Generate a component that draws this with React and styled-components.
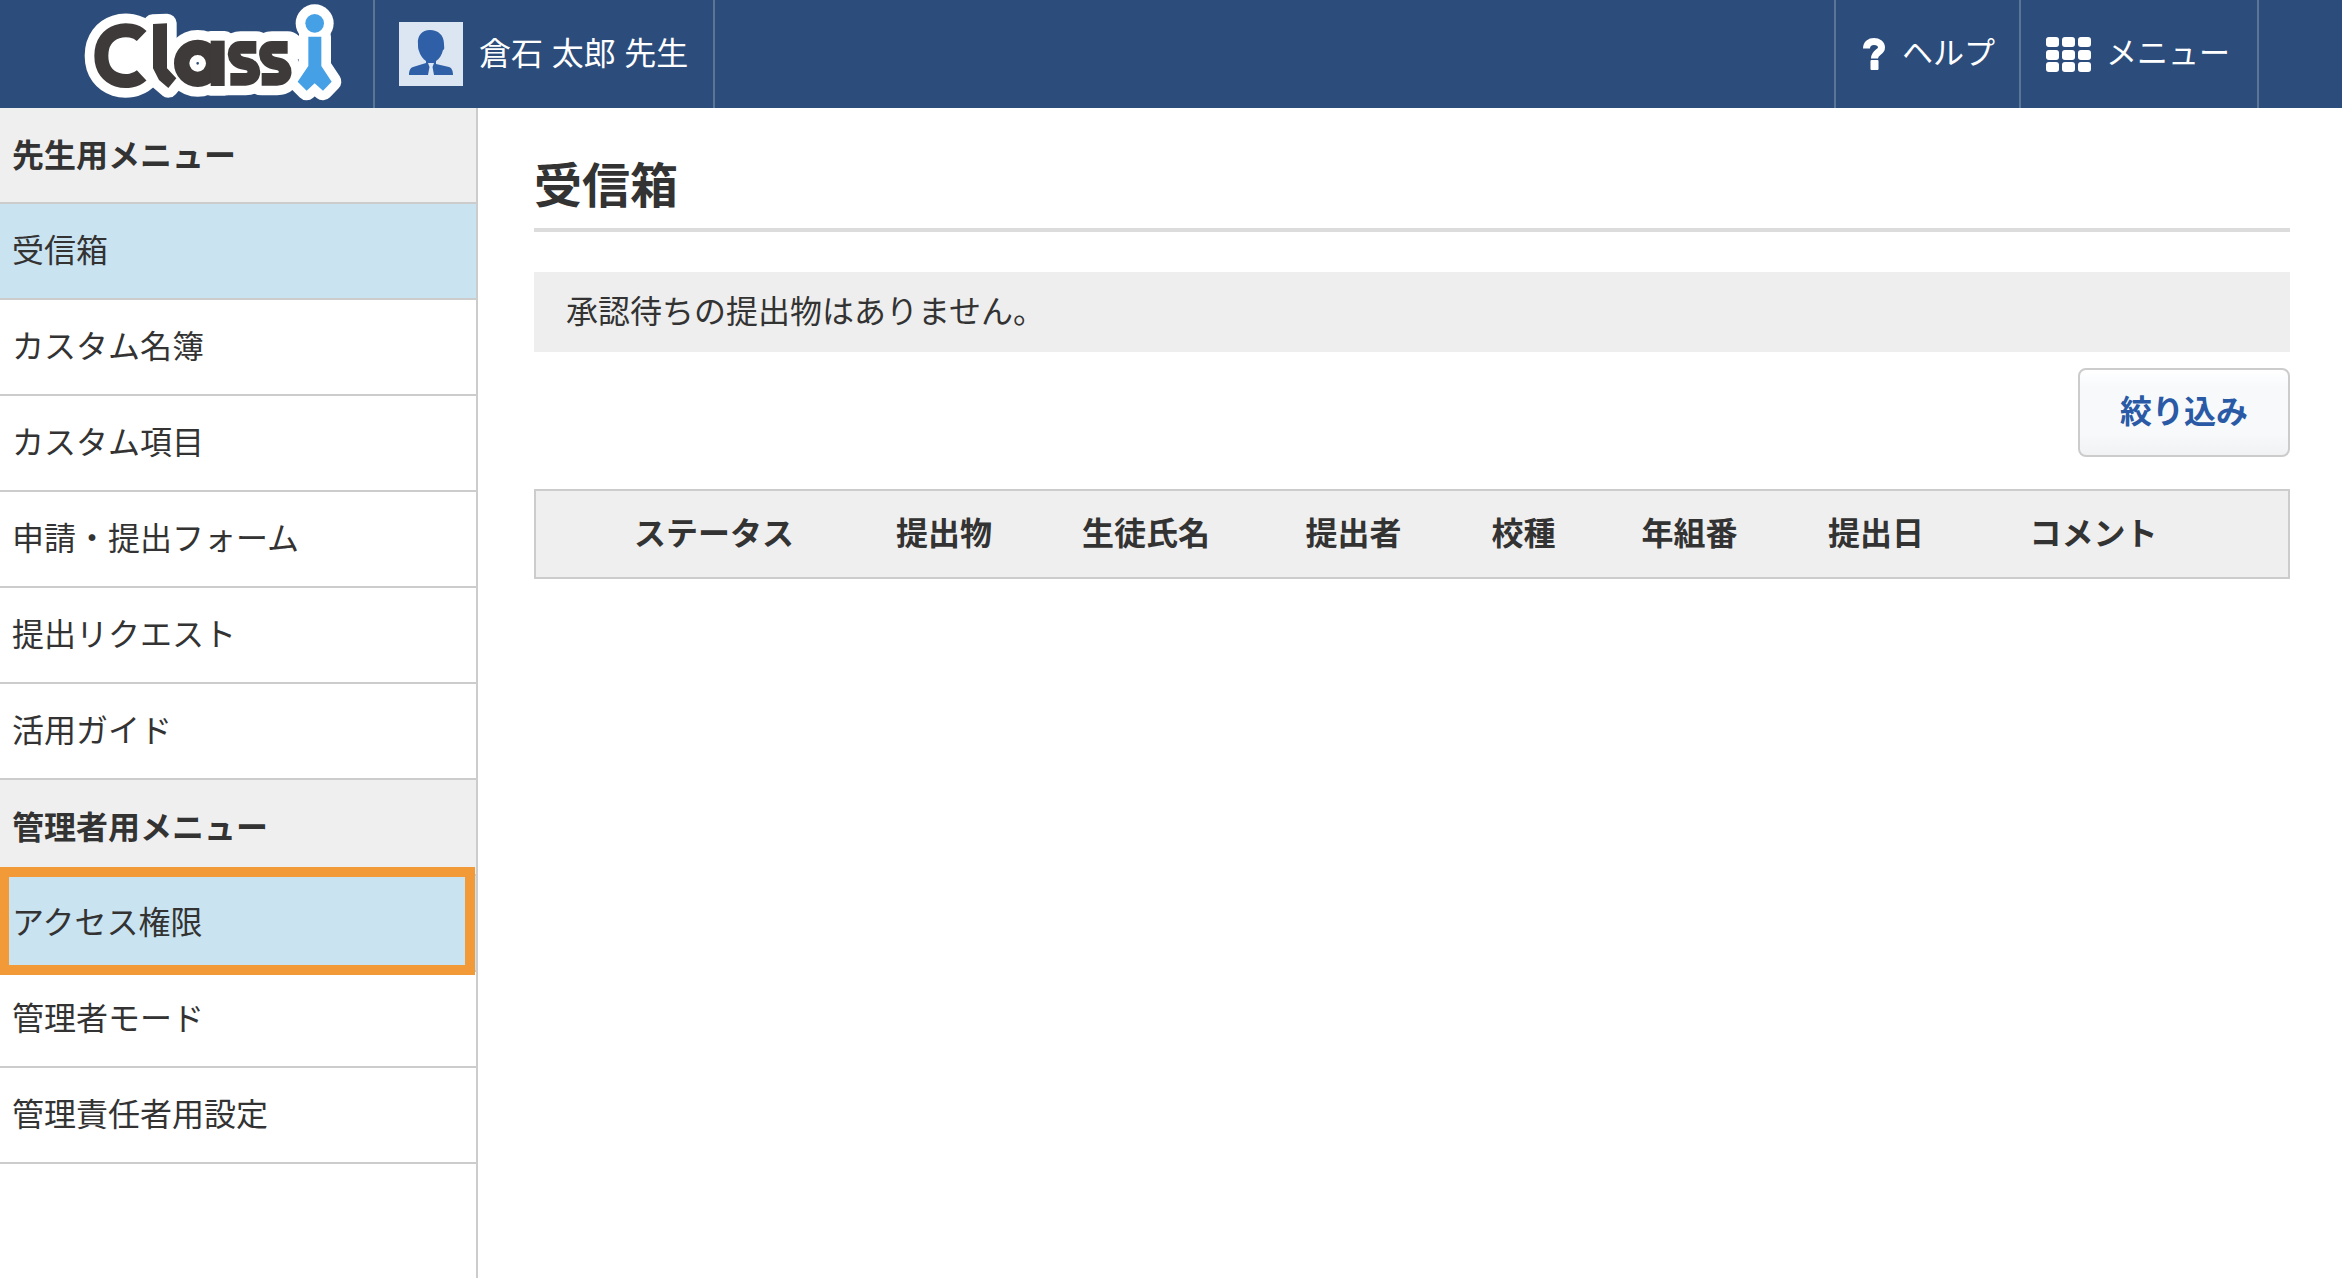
import React from "react";
import styled, { createGlobalStyle } from "styled-components";

const Global = createGlobalStyle`
  html, body { margin: 0; padding: 0; background: #fff; }
  body { font-family: "Noto Sans CJK JP", "Liberation Sans", sans-serif; color: #333; overflow: hidden; }
  * { box-sizing: border-box; }
`;

const Page = styled.div`
  width: 2342px;
  height: 1278px;
  display: flex;
  flex-direction: column;
`;

const TopBar = styled.header`
  height: 108px;
  flex: none;
  display: flex;
  align-items: stretch;
  background: #2c4d7c;
  color: #fff;
  font-size: 32px;
`;

const LogoSlot = styled.div`
  width: 373px;
  flex: none;
  padding-left: 59px;
  display: flex;
  align-items: flex-start;
`;

const UserBox = styled.div`
  width: 342px;
  display: flex;
  align-items: center;
  gap: 16px;
  padding-left: 24px;
  border-left: 2px solid #5b7597;
  border-right: 2px solid #5b7597;
`;

const Avatar = styled.svg`
  width: 64px;
  height: 64px;
  flex: none;
  display: block;
`;

const BarLabel = styled.span`
  margin-bottom: 7px;
  line-height: 40px;
  word-spacing: 1.5px;
`;

const Spacer = styled.div`
  flex: 1;
`;

const TopLink = styled.a`
  width: ${(p) => p.$width}px;
  padding-left: ${(p) => p.$pad}px;
  display: flex;
  align-items: center;
  gap: ${(p) => p.$gap}px;
  font-size: 31px;
  border-left: 2px solid #5b7597;
  border-right: ${(p) => (p.$last ? "2px solid #5b7597" : "0")};
`;

const RightGap = styled.div`
  width: 83px;
  flex: none;
`;

const Body = styled.div`
  flex: 1;
  display: flex;
  min-height: 0;
`;

const Sidebar = styled.nav`
  width: 478px;
  flex: none;
  border-right: 2px solid #ccc;
`;

const SectionTitle = styled.div`
  height: 96px;
  display: flex;
  align-items: center;
  padding: 0 0 5px 12px;
  font-size: 32px;
  font-weight: 700;
  background: #efefef;
  border-bottom: 2px solid #ccc;
`;

const MenuRow = styled.div`
  position: relative;
  z-index: ${(p) => (p.$framed ? 1 : "auto")};
  height: 96px;
  display: flex;
  align-items: center;
  padding: 0 0 6px 12px;
  font-size: 32px;
  background: ${(p) => (p.$active ? "#cae3f1" : "#fff")};
  border-bottom: 2px solid #ccc;
`;

const Highlight = styled.div`
  position: absolute;
  top: -9px;
  left: 0;
  right: 1px;
  bottom: -5px;
  border: 10px solid #f29938;
  border-left-width: 9px;
`;

const Main = styled.main`
  flex: 1;
  padding: 51px 52px 0 56px;
`;

const Title = styled.h1`
  margin: 0;
  height: 69px;
  font-size: 48px;
  line-height: 46px;
  font-weight: 700;
`;

const TitleRule = styled.div`
  height: 4px;
  background: #dcdcdc;
`;

const Notice = styled.div`
  margin-top: 40px;
  height: 80px;
  display: flex;
  align-items: center;
  padding: 0 0 6px 32px;
  background: #eee;
  font-size: 32px;
`;

const ButtonRow = styled.div`
  margin-top: 16px;
  display: flex;
  justify-content: flex-end;
`;

const FilterButton = styled.button`
  width: 212px;
  height: 89px;
  padding: 0 0 8px;
  font-family: inherit;
  font-size: 32px;
  font-weight: 700;
  color: #2a5aa5;
  background: linear-gradient(#ffffff, #f7f9fb 20%, #f7f9fb 75%, #f0f2f4);
  border: 2px solid #ccc;
  border-radius: 8px;
`;

const TableHead = styled.div`
  margin-top: 32px;
  height: 90px;
  padding-bottom: 7px;
  display: grid;
  grid-template-columns: 48px 260px 200px 204px 211px 129px 203px 170px 265px 1fr;
  align-items: center;
  background: #efefef;
  border: 2px solid #ccc;
  font-size: 32px;
  font-weight: 700;
`;

const HeadCell = styled.div`
  text-align: center;
  line-height: 40px;
`;

function ClassiShapes({ extra, white }) {
  const dark = white ? "#fff" : "#3e3a39";
  const blue = white ? "#fff" : "#45a0e6";
  const cap = white ? "round" : "butt";
  const line = { fill: "none", strokeLinejoin: "round", strokeLinecap: cap };
  const solid = { strokeWidth: extra, strokeLinejoin: "round" };
  return (
    <g>
      <path d="M248 108C215 76 127 85 127 167C127 250 215 257 248 226" stroke={dark} strokeWidth={42 + extra} {...line} />
      <path d="M282 72L324 70L324 205L352 235L328 264L300 240L282 205Z" fill={dark} stroke={white ? dark : "none"} {...solid} />
      <circle cx="416" cy="190" r="48" stroke={dark} strokeWidth={46 + extra} fill="none" />
      <path d="M455 122H497V258H455Z" fill={dark} stroke={white ? dark : "none"} {...solid} />
      <path d="M592 142L545 142C518 142 518 182 550 189L565 192C592 198 592 238 560 238L514 238" stroke={dark} strokeWidth={38 + extra} {...line} />
      <path d="M686 142L639 142C612 142 612 182 644 189L659 192C686 198 686 238 654 238L608 238" stroke={dark} strokeWidth={38 + extra} {...line} />
      <circle cx="767" cy="70" r={28 + extra / 2} fill={blue} />
      <path d="M748 110H787V198L818 245L792 272L767 250L743 272L716 245L748 198Z" fill={blue} stroke={white ? blue : "none"} {...solid} />
    </g>
  );
}

function Logo() {
  return (
    <svg width="300" height="108" viewBox="0 0 900 324" aria-label="Classi">
      <ellipse cx="190" cy="170" rx="100" ry="100" fill="#fff" />
      <ClassiShapes extra={58} white />
      <ClassiShapes extra={0} />
    </svg>
  );
}

function HelpIcon() {
  return (
    <svg width="22" height="32" viewBox="0 0 22 32">
      <path d="M3.5 10.5C3.5 5.5 7 3.5 11 3.5C15 3.5 18.5 5.5 18.5 9.5C18.5 14.5 11.5 14 11.5 20.5" fill="none" stroke="#fff" strokeWidth="7" />
      <rect x="7.5" y="22" width="8" height="10" rx="1" fill="#fff" />
    </svg>
  );
}

function GridIcon() {
  const cells = [];
  [0, 13, 25].forEach((y) =>
    [0, 16, 32].forEach((x) => cells.push(<rect key={`${x}-${y}`} x={x} y={y} width="13" height="10" rx="3" fill="#fff" />))
  );
  return (
    <svg width="45" height="35" viewBox="0 0 45 35">
      {cells}
    </svg>
  );
}

const columns = ["", "ステータス", "提出物", "生徒氏名", "提出者", "校種", "年組番", "提出日", "コメント", ""];
const teacherMenu = ["受信箱", "カスタム名簿", "カスタム項目", "申請・提出フォーム", "提出リクエスト", "活用ガイド"];
const adminMenu = ["アクセス権限", "管理者モード", "管理責任者用設定"];

export default function App() {
  return (
    <Page>
      <Global />
      <TopBar>
        <LogoSlot>
          <Logo />
        </LogoSlot>
        <UserBox>
          <Avatar viewBox="0 0 64 64">
            <rect width="64" height="64" fill="#dce6f3" />
            <path d="M19 22C18 14 23 8 31 8C39 8 45 13 45 22C45 24 46 28 44 28C43 33 40 37 37 39L37 42L50 45C53 46 54 49 54 53H10C10 49 11 46 14 45L27 41L27 39C24 37 21 33 20 29C19 27 19 25 19 22Z" fill="#2f5fa6" />
            <path d="M29 41L35 41L33.5 45L35 53H29L30.5 45Z" fill="#dce6f3" />
          </Avatar>
          <BarLabel>倉石 太郎 先生</BarLabel>
        </UserBox>
        <Spacer />
        <TopLink $width={185} $pad={27} $gap={17}>
          <HelpIcon />
          <BarLabel>ヘルプ</BarLabel>
        </TopLink>
        <TopLink $width={240} $pad={25} $gap={15} $last>
          <GridIcon />
          <BarLabel>メニュー</BarLabel>
        </TopLink>
        <RightGap />
      </TopBar>
      <Body>
        <Sidebar>
          <SectionTitle>先生用メニュー</SectionTitle>
          {teacherMenu.map((item, i) => (
            <MenuRow key={item} $active={i === 0}>{item}</MenuRow>
          ))}
          <SectionTitle>管理者用メニュー</SectionTitle>
          {adminMenu.map((item, i) => (
            <MenuRow key={item} $active={i === 0} $framed={i === 0}>
              {i === 0 && <Highlight />}
              {item}
            </MenuRow>
          ))}
        </Sidebar>
        <Main>
          <Title>受信箱</Title>
          <TitleRule />
          <Notice>承認待ちの提出物はありません。</Notice>
          <ButtonRow>
            <FilterButton>絞り込み</FilterButton>
          </ButtonRow>
          <TableHead>
            {columns.map((c, i) => (
              <HeadCell key={i}>{c}</HeadCell>
            ))}
          </TableHead>
        </Main>
      </Body>
    </Page>
  );
}
